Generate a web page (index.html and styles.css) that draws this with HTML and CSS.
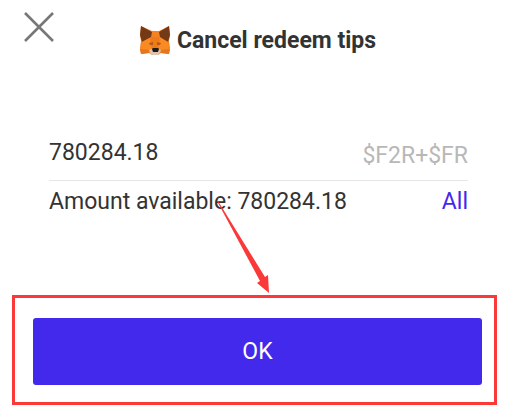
FILE: index.html
```html
<!DOCTYPE html>
<html lang="en">
<head>
<meta charset="utf-8">
<meta name="viewport" content="width=device-width, initial-scale=1">
<title>Cancel redeem tips</title>
<link rel="stylesheet" href="styles.css">
</head>
<body>
<main class="dialog">
  <header class="header">
    <button class="close" type="button" aria-label="Close">
      <svg viewBox="0 0 30 30" width="30" height="30" aria-hidden="true"><path d="M1 1 29 29M29 1 1 29" fill="none" stroke="#777" stroke-width="2.6"/></svg>
    </button>
    <h1 class="title">
      <svg class="fox" viewBox="0 0 32 30" width="32" height="30" aria-hidden="true">
        <path fill="#f58220" d="M2 0 13 5h7L30 0l1 9-1 6 1 7-1 6-8-1-3 2h-6l-3-2-8 1-1-6 1-7-1-6z"/>
        <path fill="#743a18" d="M2 0 13 6 12 11 3 16 1 9zM30 0 20 6l1 5 8 5 2-7z"/>
        <path fill="#ee7a1a" d="m12 11 8 0 3 9-3 4h-7l-3-4z"/>
        <path fill="#fa8a22" d="M3 16l8-4 2 12-11-1zM29 16l-8-4-2 12 11-1z"/>
        <path fill="#b35a1c" d="m10 17 4-1 0 3-3 0zM22 17l-4-1 0 3 3 0z"/>
        <path fill="#dfc3ac" d="m10 24 3-1h6l3 1-2 5h-8z"/>
        <path fill="#1d1b1b" d="m13 23 1-1h5l1 1-1 3h-5z"/>
        <path fill="#e77618" d="m1 23 9 1 0 3-8 1zM31 23l-9 1 0 3 8 1z"/>
      </svg>
      <span>Cancel redeem tips</span>
    </h1>
  </header>
  <form class="form">
    <div class="row entry">
      <input class="amount" type="text" value="780284.18" aria-label="Redeem amount">
      <span class="unit">$F2R+$FR</span>
    </div>
    <div class="row available">
      <span>Amount available: 780284.18</span>
      <button class="all" type="button">All</button>
    </div>
    <div class="highlight">
      <button class="ok" type="button">OK</button>
      <svg class="arrow" viewBox="0 0 54 92" width="54" height="92" aria-hidden="true"><path fill="#fb3939" d="M0 0 1 0 48 76l3-2 1 18-12-10 3-2z"/></svg>
    </div>
  </form>
</main>
</body>
</html>
```
FILE: styles.css
```css
* { box-sizing: border-box; }
body {
  margin: 0;
  background: #fff;
  color: #333;
  font: 23px/32px Roboto, sans-serif;
}
button, input {
  margin: 0;
  padding: 0;
  border: 0;
  background: none;
  color: inherit;
  font: inherit;
}
svg { display: block; }
.dialog { padding-top: 12px; }
.header {
  display: grid;
  grid-template-columns: 54px 1fr 54px;
}
.close { padding-left: 24px; align-self: start; }
.title {
  display: flex;
  align-items: center;
  justify-content: center;
  gap: 6px;
  margin: 13px 0 0;
  font-size: 23px;
  line-height: 32px;
  font-weight: 700;
}
.row {
  display: flex;
  justify-content: space-between;
  align-items: center;
  margin: 0 47px 0 49px;
}
.entry {
  align-items: flex-start;
  margin-top: 80px;
  padding-bottom: 8px;
  border-bottom: 1px solid #e6e6e6;
}
.amount { flex: 1; min-width: 0; height: 32px; }
.unit { padding-top: 3px; color: #b8b8b8; }
.available { padding-top: 5px; }
.all { color: #4229eb; }
.highlight {
  position: relative;
  margin: 77px 18px 8px 12px;
  padding: 20px 12px 17px 18px;
  border: 3px solid #fb3939;
}
.ok {
  display: block;
  width: 100%;
  padding: 18px 0 17px;
  border-radius: 3px;
  background: #4229eb;
  color: #fff;
}
.arrow {
  position: absolute;
  left: 202px;
  top: -97px;
  overflow: visible;
}
```
